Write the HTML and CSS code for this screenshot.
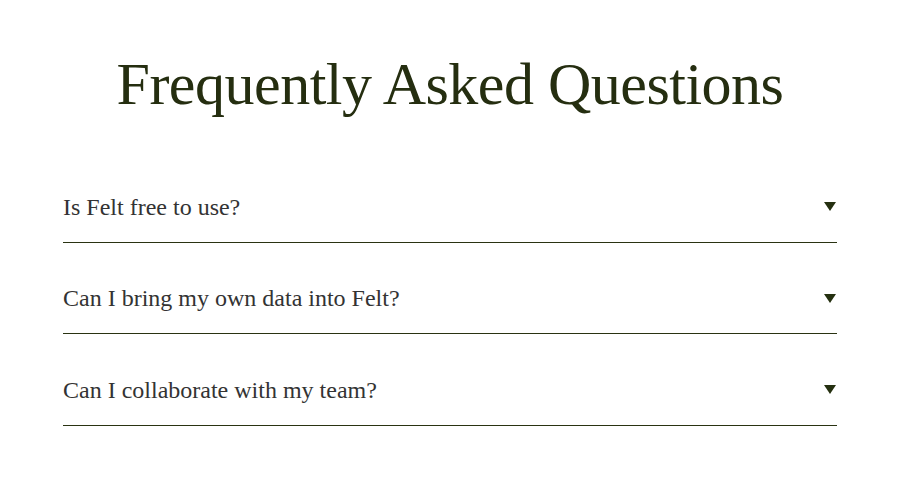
FILE: index.html
```html
<!DOCTYPE html>
<html lang="en">
<head>
<meta charset="utf-8">
<title>FAQ</title>
<link rel="stylesheet" href="styles.css">
</head>
<body>
<section class="faq">
  <h1 class="faq-title">Frequently Asked Questions</h1>
  <div class="faq-list">
    <div class="faq-item">
      <span class="faq-q">Is Felt free to use?</span>
      <span class="faq-arrow"></span>
    </div>
    <div class="faq-item">
      <span class="faq-q">Can I bring my own data into Felt?</span>
      <span class="faq-arrow"></span>
    </div>
    <div class="faq-item">
      <span class="faq-q">Can I collaborate with my team?</span>
      <span class="faq-arrow"></span>
    </div>
  </div>
</section>
</body>
</html>
```

FILE: styles.css
```css
html, body {
  margin: 0;
  padding: 0;
  background: #ffffff;
}
.faq {
  width: 774px;
  margin: 0 auto;
  font-family: "Liberation Serif", "Times New Roman", serif;
}
.faq-title {
  margin: 0;
  padding-top: 48px;
  font-size: 60px;
  line-height: 72px;
  font-weight: 400;
  text-align: center;
  color: #252e10;
  letter-spacing: -0.5px;
}
.faq-list {
  margin-top: 31px;
}
.faq-item {
  display: flex;
  align-items: center;
  justify-content: space-between;
  padding: 41.5px 0 21px;
  line-height: 28px;
  border-bottom: 1px solid #2a3312;
}
.faq-q {
  font-size: 24px;
  color: #333333;
}
.faq-arrow {
  width: 0;
  height: 0;
  margin-right: 1px;
  border-left: 6.5px solid transparent;
  border-right: 6.5px solid transparent;
  border-top: 9px solid #253010;
}
```
